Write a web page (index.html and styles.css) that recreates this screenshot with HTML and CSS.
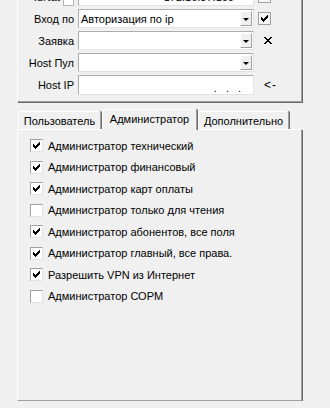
FILE: index.html
```html
<!DOCTYPE html>
<html>
<head>
    <meta charset="UTF-8">
    <title>Права пользователя</title>
    <link rel="stylesheet" href="styles.css">
</head>
<body>
    <div class="group">
        <div class="row cut">
            <div class="lbl">IdNat <span class="spin"></span></div>
            <div class="edit"><span class="val right">172.16.37.100</span></div>
            <span class="box plain"></span>
        </div>
        <div class="row">
            <div class="lbl">Вход по</div>
            <div class="combo"><span class="val">Авторизация по ip</span><span class="drop"></span></div>
            <span class="box plain">
                <svg viewBox="0 0 11 11" width="11" height="11"><path d="M8 2h1v1h-1z M7 3h2v1h-2z M2 4h1v1h-1z M6 4h3v1h-3z M2 5h2v1h-2z M5 5h3v1h-3z M2 6h5v1h-5z M3 7h3v1h-3z M4 8h1v1h-1z"/></svg>
            </span>
        </div>
        <div class="row">
            <div class="lbl">Заявка</div>
            <div class="combo"><span class="val"></span><span class="drop"></span></div>
            <span class="icon">
                <svg viewBox="0 0 8 8" width="8" height="8"><path d="M0 0h2v1h-2z M6 0h2v1h-2z M1 1h2v1h-2z M5 1h2v1h-2z M2 2h4v1h-4z M3 3h2v1h-2z M2 4h4v1h-4z M1 5h2v1h-2z M5 5h2v1h-2z M0 6h2v1h-2z M6 6h2v1h-2z"/></svg>
            </span>
        </div>
        <div class="row">
            <div class="lbl">Host Пул</div>
            <div class="combo"><span class="val"></span><span class="drop"></span></div>
            <span></span>
        </div>
        <div class="row tall">
            <div class="lbl">Host IP</div>
            <div class="edit ip"><span>.</span><span>.</span><span>.</span></div>
            <span class="arrow">&lt;-</span>
        </div>
    </div>

    <div class="tabs">
        <div class="tabbar">
            <div class="tab first">Пользователь</div>
            <div class="tab active">Администратор</div>
            <div class="tab last">Дополнительно</div>
        </div>
        <div class="page">
            <div class="opt"><span class="box"><svg viewBox="0 0 11 11" width="11" height="11"><path d="M8 2h1v1h-1z M7 3h2v1h-2z M2 4h1v1h-1z M6 4h3v1h-3z M2 5h2v1h-2z M5 5h3v1h-3z M2 6h5v1h-5z M3 7h3v1h-3z M4 8h1v1h-1z"/></svg></span>Администратор технический</div>
            <div class="opt"><span class="box"><svg viewBox="0 0 11 11" width="11" height="11"><path d="M8 2h1v1h-1z M7 3h2v1h-2z M2 4h1v1h-1z M6 4h3v1h-3z M2 5h2v1h-2z M5 5h3v1h-3z M2 6h5v1h-5z M3 7h3v1h-3z M4 8h1v1h-1z"/></svg></span>Администратор финансовый</div>
            <div class="opt"><span class="box"><svg viewBox="0 0 11 11" width="11" height="11"><path d="M8 2h1v1h-1z M7 3h2v1h-2z M2 4h1v1h-1z M6 4h3v1h-3z M2 5h2v1h-2z M5 5h3v1h-3z M2 6h5v1h-5z M3 7h3v1h-3z M4 8h1v1h-1z"/></svg></span>Администратор карт оплаты</div>
            <div class="opt"><span class="box"></span>Администратор только для чтения</div>
            <div class="opt"><span class="box"><svg viewBox="0 0 11 11" width="11" height="11"><path d="M8 2h1v1h-1z M7 3h2v1h-2z M2 4h1v1h-1z M6 4h3v1h-3z M2 5h2v1h-2z M5 5h3v1h-3z M2 6h5v1h-5z M3 7h3v1h-3z M4 8h1v1h-1z"/></svg></span>Администратор абонентов, все поля</div>
            <div class="opt"><span class="box"><svg viewBox="0 0 11 11" width="11" height="11"><path d="M8 2h1v1h-1z M7 3h2v1h-2z M2 4h1v1h-1z M6 4h3v1h-3z M2 5h2v1h-2z M5 5h3v1h-3z M2 6h5v1h-5z M3 7h3v1h-3z M4 8h1v1h-1z"/></svg></span>Администратор главный, все права.</div>
            <div class="opt"><span class="box"><svg viewBox="0 0 11 11" width="11" height="11"><path d="M8 2h1v1h-1z M7 3h2v1h-2z M2 4h1v1h-1z M6 4h3v1h-3z M2 5h2v1h-2z M5 5h3v1h-3z M2 6h5v1h-5z M3 7h3v1h-3z M4 8h1v1h-1z"/></svg></span>Разрешить VPN из Интернет</div>
            <div class="opt"><span class="box"></span>Администратор СОРМ</div>
        </div>
    </div>
</body>
</html>
```

FILE: styles.css
```css
/* Classic dialog look */
body {
    margin: 0;
    padding: 0;
    background-color: #f0f0f0;
    font-family: "Liberation Sans", Arial, sans-serif;
    font-size: 11px;
    color: #000;
    overflow: hidden;
}
svg {
    display: block;
    shape-rendering: crispEdges;
}

/* Upper frame with the login fields */
.group {
    margin: -14px 0 0 17px;
    width: 285px;
    box-sizing: border-box;
    border-top: 1px solid #fff;
    border-left: 1px solid #fff;
    border-right: 1px solid #a0a0a0;
    border-bottom: 1px solid #a0a0a0;
    box-shadow: 1px 1px 0 #696969;
    padding-bottom: 6px;
    display: flex;
    flex-direction: column;
    gap: 3px;
}
.row {
    display: grid;
    grid-template-columns: 56px 176px 20px;
    column-gap: 4px;
    height: 19px;
    align-items: center;
}
.row.tall {
    height: 20px;
}
.lbl {
    text-align: right;
    white-space: nowrap;
}
.cut .lbl {
    display: flex;
    justify-content: flex-end;
    align-items: center;
    gap: 3px;
}
.spin {
    display: inline-block;
    width: 9px;
    height: 17px;
    border: 1px solid #b4b4b4;
    background-color: #fff;
}
.combo, .edit {
    height: 100%;
    box-sizing: border-box;
    border: 1px solid;
    border-color: #adadad #e3e3e3 #e3e3e3 #adadad;
    background-color: #fff;
    display: flex;
    align-items: center;
    padding: 0 1px 0 2px;
}
.val {
    flex: 1;
    white-space: nowrap;
    overflow: hidden;
}
.val.right {
    text-align: right;
    padding-right: 18px;
}
.drop {
    width: 12px;
    height: 15px;
    box-sizing: border-box;
    border: 1px solid;
    border-color: #fff #a0a0a0 #a0a0a0 #fff;
    background-color: #f0f0f0;
    display: flex;
    align-items: center;
    justify-content: center;
}
.drop::after {
    content: "";
    border-left: 3px solid transparent;
    border-right: 3px solid transparent;
    border-top: 3px solid #000;
    margin-top: 1px;
}
.edit.ip {
    justify-content: flex-end;
    gap: 9px;
    padding-right: 12px;
    align-items: flex-end;
    padding-bottom: 2px;
    line-height: 8px;
}
.icon {
    padding-left: 6px;
}
.arrow {
    padding-left: 6px;
    font-size: 12px;
    letter-spacing: 1px;
}

/* Check boxes */
.box {
    width: 13px;
    height: 13px;
    box-sizing: border-box;
    border: 1px solid;
    border-color: #a0a0a0 #e3e3e3 #e3e3e3 #a0a0a0;
    background-color: #fff;
    flex: none;
}
.box.plain {
    border-color: #a0a0a0;
    background-color: #f7f7f7;
}

/* Tab control */
.tabs {
    margin: 7px 0 0 17px;
    width: 285px;
}
.tabbar {
    display: flex;
    align-items: flex-end;
    height: 20px;
    padding-left: 1px;
    position: relative;
    z-index: 1;
}
.tab {
    height: 18px;
    box-sizing: border-box;
    border-top: 1px solid #fff;
    border-left: 1px solid #fff;
    border-right: 1px solid #a0a0a0;
    box-shadow: 1px 0 0 #696969;
    border-radius: 2px 2px 0 0;
    display: flex;
    align-items: center;
    justify-content: center;
    white-space: nowrap;
    background-color: #f0f0f0;
}
.tab.first {
    width: 83px;
}
.tab.active {
    width: 95px;
    height: 21px;
    margin: 0 1px -1px 1px;
    padding-bottom: 2px;
}
.tab.last {
    width: 91px;
}
.page {
    height: 272px;
    box-sizing: border-box;
    border-top: 1px solid #fff;
    border-left: 1px solid #fff;
    border-right: 1px solid #a0a0a0;
    border-bottom: 1px solid #a0a0a0;
    box-shadow: 1px 1px 0 #696969;
    padding: 5px 0 0 12px;
}
.opt {
    display: flex;
    align-items: center;
    gap: 5px;
    height: 21.5px;
    white-space: nowrap;
}
```
